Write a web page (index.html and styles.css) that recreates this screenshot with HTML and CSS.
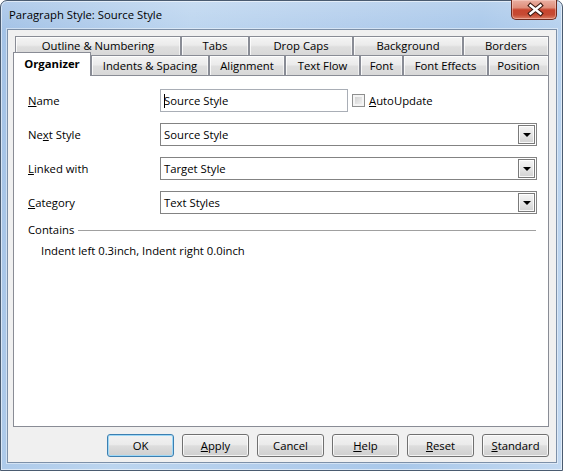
FILE: index.html
```html
<!DOCTYPE html>
<html>
<head>
<meta charset="utf-8">
<title>Paragraph Style: Source Style</title>
<link rel="stylesheet" href="styles.css">
</head>
<body>
<div class="window">
  <div class="titlebar">
    <span class="title">Paragraph Style: Source Style</span>
    <div class="close">
      <svg class="close-x" width="46" height="19" viewBox="0 0 46 19">
        <path d="M19.5 5.5 L29.5 13.5 M29.5 5.5 L19.5 13.5" stroke="#3d1a12" stroke-width="4.6" stroke-linecap="square" fill="none"/>
        <path d="M19.5 5.5 L29.5 13.5 M29.5 5.5 L19.5 13.5" stroke="#ffffff" stroke-width="2.4" stroke-linecap="square" fill="none"/>
      </svg>
    </div>
  </div>
  <div class="client">
    <div class="tabs">
      <div class="tabrow row1">
        <div class="tab t-outline">Outline &amp; Numbering</div>
        <div class="tab t-tabs">Tabs</div>
        <div class="tab t-dropcaps">Drop Caps</div>
        <div class="tab t-background">Background</div>
        <div class="tab t-borders">Borders</div>
      </div>
      <div class="tabrow row2">
        <div class="tab sel t-organizer">Organizer</div>
        <div class="tab t-indents">Indents &amp; Spacing</div>
        <div class="tab t-alignment">Alignment</div>
        <div class="tab t-textflow">Text Flow</div>
        <div class="tab t-font">Font</div>
        <div class="tab t-effects">Font Effects</div>
        <div class="tab t-position">Position</div>
      </div>
    </div>
    <div class="panel">
      <div class="form">
        <span class="lbl"><u>N</u>ame</span>
        <div class="namerow">
          <div class="input"><span class="caret"></span><span>Source Style</span></div>
          <span class="check"></span>
          <span class="cblabel"><u>A</u>utoUpdate</span>
        </div>

        <span class="lbl">Ne<u>x</u>t Style</span>
        <div class="combo"><span class="ctext">Source Style</span><span class="dd"><span class="tri"></span></span></div>

        <span class="lbl"><u>L</u>inked with</span>
        <div class="combo"><span class="ctext">Target Style</span><span class="dd"><span class="tri"></span></span></div>

        <span class="lbl"><u>C</u>ategory</span>
        <div class="combo"><span class="ctext">Text Styles</span><span class="dd"><span class="tri"></span></span></div>
      </div>
      <div class="section"><span>Contains</span></div>
      <div class="contains">Indent left 0.3inch, Indent right 0.0inch</div>
    </div>
    <div class="buttons">
      <div class="btn default">OK</div>
      <div class="btn"><u>A</u>pply</div>
      <div class="btn">Cancel</div>
      <div class="btn"><u>H</u>elp</div>
      <div class="btn"><u>R</u>eset</div>
      <div class="btn"><u>S</u>tandard</div>
    </div>
  </div>
</div>
</body>
</html>
```

FILE: styles.css
```css
* { box-sizing: border-box; }
html, body { margin: 0; padding: 0; }
body {
  width: 565px;
  height: 471px;
  overflow: hidden;
  background: #ffffff;
  font-family: "Open Sans", "Noto Sans", sans-serif;
  font-size: 11.3px;
  color: #000;
}
u { text-decoration: underline; text-underline-offset: 1px; }

.window {
  width: 563px;
  height: 471px;
  border: 1px solid #4a5b70;
  border-radius: 7px 7px 0 0;
  padding: 0 5px 7px 6px;
  display: flex;
  flex-direction: column;
  background:
    linear-gradient(180deg, rgba(255,255,255,0.18) 0px, rgba(255,255,255,0) 30px),
    linear-gradient(100deg, #a3c2e6 0%, #bcd5ef 30%, #b2cdec 55%, #a9c8ea 75%, #c3d9f1 100%);
  box-shadow: inset 0 0 0 1px rgba(255,255,255,0.55);
}

.titlebar {
  height: 28px;
  display: flex;
  align-items: flex-start;
  padding-left: 2px;
}
.title {
  margin-top: 6px;
  line-height: 16px;
  color: #000;
}
.close {
  margin-left: auto;
  margin-top: -1px;
  width: 46px;
  height: 20px;
  border: 1px solid #6e2a1e;
  border-top: none;
  border-radius: 0 0 5px 5px;
  background: linear-gradient(180deg, #eab0a2 0%, #df8e7b 40%, #c8452e 52%, #c54a33 78%, #dc7f66 100%);
  box-shadow: inset 0 0 0 1px rgba(255,220,210,0.45);
  position: relative;
}
.close-x { display: block; margin-left: -1px; margin-top: 0; }

.client {
  flex: 1;
  display: flex;
  flex-direction: column;
  background: #f0f0f0;
  border: 1px solid #7d90a8;
  box-shadow: 0 0 0 1px rgba(255,255,255,0.45);
  padding: 6px 7px 5px 5px;
}

.tabs {
  height: 39px;
  display: flex;
  flex-direction: column;
}
.tabrow { display: flex; }
.row1 { margin-left: 2px; height: 19px; }
.row2 { height: 20px; align-items: flex-end; }
.tab {
  border: 1px solid #898c95;
  border-bottom: none;
  background: linear-gradient(180deg, #f4f4f4 0%, #ebebeb 45%, #dedede 55%, #d8d8d8 100%);
  box-shadow: inset 1px 1px 0 rgba(255,255,255,0.8), inset -1px 0 0 rgba(255,255,255,0.6);
  text-align: center;
  white-space: nowrap;
}
.row1 .tab { height: 19px; line-height: 17px; }
.row2 .tab { height: 20px; line-height: 19px; }
.tab.sel {
  height: 24px;
  line-height: 22px;
  margin-bottom: -1px;
  background: #ffffff;
  box-shadow: none;
  font-weight: bold;
  position: relative;
  z-index: 1;
}
.t-outline { width: 166px; }
.t-tabs { width: 68px; }
.t-dropcaps { width: 104px; }
.t-background { width: 110px; }
.t-borders { width: 86px; }
.t-organizer { width: 78px; }
.t-indents { width: 118px; }
.t-alignment { width: 76px; }
.t-textflow { width: 75px; }
.t-font { width: 43px; }
.t-effects { width: 85px; }
.t-position { width: 61px; }

.panel {
  height: 352px;
  border: 1px solid #898c95;
  background: #ffffff;
  padding: 13px 11px 0 14px;
}
.form {
  display: grid;
  grid-template-columns: 132px 1fr;
  grid-auto-rows: 23px;
  row-gap: 11px;
  align-items: center;
}
.lbl { line-height: 16px; }
.namerow { display: flex; align-items: center; height: 23px; }
.input {
  width: 188px;
  height: 23px;
  border: 1px solid #a9aeb6;
  display: flex;
  align-items: center;
  padding-left: 3px;
}
.caret {
  width: 1px;
  height: 14px;
  background: #000;
  margin-right: -1px;
}
.check {
  width: 13px;
  height: 13px;
  margin-left: 4px;
  border: 1px solid #8e8f8f;
  background: linear-gradient(135deg, #c9c9c9 0%, #e6e6e6 60%, #f6f6f6 100%);
  box-shadow: inset 0 0 0 2px #f4f4f4;
}
.cblabel { margin-left: 4px; line-height: 16px; }

.combo {
  height: 23px;
  border: 1px solid #838383;
  display: flex;
  align-items: center;
  padding: 1px 1px 1px 3px;
}
.ctext { flex: 1; line-height: 16px; }
.dd {
  width: 17px;
  height: 19px;
  border: 1px solid #7a7a7a;
  background: linear-gradient(180deg, #f5f5f5 0%, #e6e6e6 50%, #d2d2d2 100%);
  box-shadow: inset 0 0 0 1px rgba(255,255,255,0.85);
  display: flex;
  align-items: center;
  justify-content: center;
}
.tri {
  width: 0;
  height: 0;
  border-left: 4px solid transparent;
  border-right: 4px solid transparent;
  border-top: 4px solid #000;
  margin-top: 1px;
}

.section {
  margin-top: 8px;
  height: 16px;
  line-height: 16px;
  display: flex;
  align-items: center;
  margin-right: 1px;
}
.section::after {
  content: "";
  flex: 1;
  height: 1px;
  margin-left: 4px;
  background: #a0a0a0;
}
.contains {
  margin-top: 5px;
  padding-left: 13px;
  line-height: 16px;
}

.buttons {
  margin-top: 7px;
  display: flex;
  justify-content: flex-end;
  gap: 8px;
}
.btn {
  width: 67px;
  height: 23px;
  border: 1px solid #707070;
  border-radius: 3px;
  text-align: center;
  line-height: 21px;
  background: linear-gradient(180deg, #f2f2f2 0%, #ebebeb 45%, #dddddd 52%, #cfcfcf 100%);
  box-shadow: inset 0 0 0 1px rgba(255,255,255,0.75);
}
.btn.default {
  border-color: #3c7fb1;
  box-shadow: inset 0 0 0 1px #9fd8f6;
}
```
